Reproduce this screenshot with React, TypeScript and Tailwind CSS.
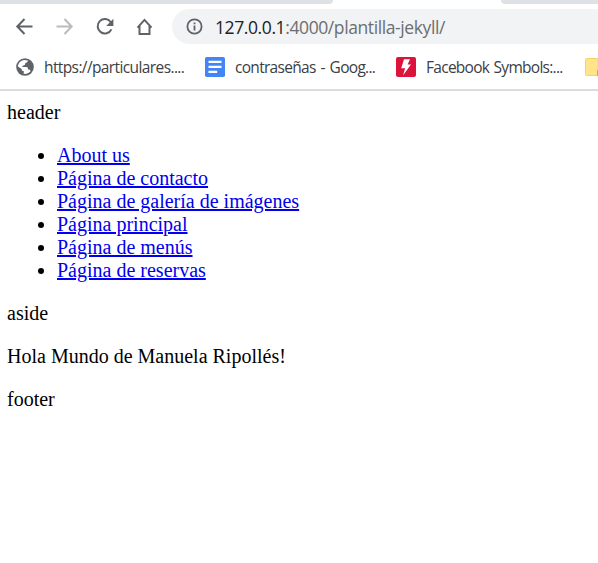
import React from "react";

const links = [
  "About us",
  "Página de contacto",
  "Página de galería de imágenes",
  "Página principal",
  "Página de menús",
  "Página de reservas",
];

function Toolbar() {
  return (
    <div className="flex h-[35px] items-center">
      <svg className="block h-[35px] w-[172px] shrink-0" viewBox="0 9 172 35" fill="none" stroke="#5f6368" strokeWidth="2">
        <path d="M32.5 26.5H18M24.5 19L17.3 26.5L24.5 34" />
        <path stroke="#babcbe" d="M56.5 26.5H71M64.5 19L71.7 26.5L64.5 34" />
        <path d="M110.8 22.2A7.2 7.2 0 1 0 111.4 29.3" />
        <path fill="#5f6368" stroke="none" d="M113.4 18.8V26H106.2Z" />
        <path d="M137.5 27.6L144.5 19.9L151.5 27.6M139.5 26V34.1H149.5V26" />
      </svg>
      <div className="flex h-[35px] flex-1 items-center rounded-l-full bg-[#f1f3f4] pl-[14px]">
        <svg className="block size-[17px] shrink-0" viewBox="0 0 17 17" fill="none" stroke="#5f6368" strokeWidth="1.8">
          <circle cx="8.5" cy="8.5" r="7.1" />
          <path d="M8.5 7.4V12.4M8.5 4.5V6.2" />
        </svg>
        <div className="ml-[12px] whitespace-nowrap text-[17.5px] leading-[24px] tracking-[-0.4px] text-[#6b6e72]">
          <span className="text-[#202124]">127.0.0.1</span>:4000/plantilla-jekyll/
        </div>
      </div>
    </div>
  );
}

function Bookmarks() {
  return (
    <div className="flex h-[45px] items-center overflow-hidden border-b-2 border-[#dadce0] pb-[2px] whitespace-nowrap text-[15.5px] leading-[20px] text-[#3c4043]">
      <svg className="ml-[16px] block size-[18px] shrink-0" viewBox="0 0 18 18">
        <circle cx="9" cy="9" r="8.8" fill="#5f6368" />
        <path d="M8.2 2.1L12 2.6C11.8 4.2 10.4 4.8 9.4 5L8.8 7.1L6.3 7.9L6.5 9.1H10.4C12 9.4 12.1 10.4 11.9 11.5L14 11.7L14.5 13.2C12.4 15.6 10 16.2 7.6 15.8L7.9 13.3C6.1 13.2 5.6 12.4 5.7 11L1.9 8.5C2.3 4.8 5 2.5 8.2 2.1Z" fill="#fff" />
      </svg>
      <span className="ml-[10px] w-[151px] tracking-[-0.61px]">https://particulares....</span>
      <svg className="ml-[10px] block size-5 shrink-0" viewBox="0 0 20 20">
        <rect width="20" height="20" rx="1.8" fill="#4285f4" />
        <path d="M3.5 4.8H16.5M3.5 9.8H16.5M3.5 14.8H12.2" stroke="#fff" strokeWidth="2.2" />
      </svg>
      <span className="ml-[10px] w-[151px] tracking-[-0.7px] [word-spacing:1.5px]">contraseñas - Goog...</span>
      <svg className="ml-[10px] block size-5 shrink-0" viewBox="0 0 20 20">
        <rect width="20" height="20" rx="2" fill="#dc143c" />
        <path d="M8 2.2H14L11.6 7.5H15L7.1 18.2L9.1 11.3H5.2Z" fill="#fff" />
      </svg>
      <span className="ml-[10px] w-[149px] tracking-[-0.72px] [word-spacing:1px]">Facebook Symbols:...</span>
      <svg className="ml-[10px] block h-[18px] w-[13px] shrink-0" viewBox="0 0 13 18">
        <path d="M.5 1.5Q.5.5 1.5.5H13V17.5H1.5Q.5 17.5.5 16.5Z" fill="#ffe48a" stroke="#f2d66d" />
        <path d="M13 11.5Q12 12 12 13V18H13Z" fill="#dcae24" />
      </svg>
    </div>
  );
}

export default function App() {
  return (
    <div className="h-[563px] w-[598px] overflow-hidden bg-white">
      <header className="font-['Open_Sans','Noto_Sans',sans-serif]">
        <div className="mb-[5px] flex h-1 justify-between">
          <div className="w-[333px] rounded-br-[5px] bg-[#dee1e6]" />
          <div className="w-[97px] rounded-bl-[5px] bg-[#dee1e6]" />
        </div>
        <Toolbar />
        <div className="mt-[2px]">
          <Bookmarks />
        </div>
      </header>
      <main className="px-[7px] pt-[10px] font-['Liberation_Serif','Times_New_Roman',serif] text-[20px] leading-[23px] text-black">
        <div>header</div>
        <ul className="my-5">
          {links.map((label) => (
            <li key={label} className="flex items-center">
              <span className="mt-px mr-[13px] ml-[31px] size-[6px] rounded-full bg-black" />
              <a href="#" className="text-[#0000ee] underline decoration-2 underline-offset-1">{label}</a>
            </li>
          ))}
        </ul>
        <div>aside</div>
        <p className="my-5">Hola Mundo de Manuela Ripollés!</p>
        <div>footer</div>
      </main>
    </div>
  );
}
